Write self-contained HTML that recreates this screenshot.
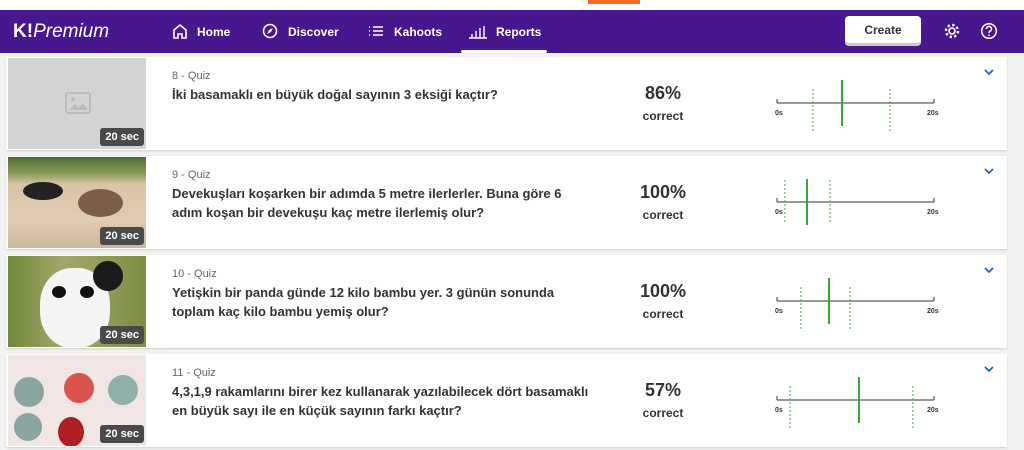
<!DOCTYPE html><html><head><style>
*{margin:0;padding:0;box-sizing:border-box}
body{width:1024px;height:450px;background:#f2f2f2;font-family:"Liberation Sans",sans-serif;position:relative;overflow:hidden;color:#333}
.top{position:absolute;left:0;top:0;width:1024px;height:10px;background:#fff}
.or{position:absolute;left:588px;top:0;width:52px;height:4px;background:#f36b21}
.nav{position:absolute;left:0;top:10px;width:1024px;height:43px;background:#46178f;color:#fff}
.logo{position:absolute;left:13px;top:11px;font-size:19px}
.logo b{font-weight:bold}.logo i{font-weight:normal}
.ni{position:absolute;top:15px;font-size:12px;font-weight:bold}
.ic{position:absolute;top:12px}
.create{position:absolute;left:845px;top:6px;width:76px;height:30px;background:#fff;border-radius:4px;color:#333;font-weight:bold;font-size:12px;text-align:center;line-height:29px;box-shadow:0 -3px 0 #ccc inset}
.ul{position:absolute;left:461px;top:40px;width:86px;height:3px;background:#fff;border-radius:2px}
.card{position:absolute;left:6px;width:1001px;height:93px;background:#fff;box-shadow:0 1px 2px rgba(0,0,0,.15)}
.img{position:absolute;left:2px;top:1px;width:138px;height:91px;overflow:hidden}
.sec{position:absolute;right:2px;bottom:3px;background:#4a4a4a;color:#fff;font-size:11px;font-weight:bold;padding:3px 5px;border-radius:3px}
.q{position:absolute;left:166px;top:13px;font-size:11px;color:#666}
.t{position:absolute;left:166px;top:28px;width:420px;font-size:13px;font-weight:bold;line-height:19px;color:#333}
.p{position:absolute;left:610px;top:26px;width:94px;text-align:center;font-size:18px;font-weight:bold;color:#333}
.c{position:absolute;left:610px;top:52px;width:94px;text-align:center;font-size:12px;font-weight:bold;color:#333}
.tl{position:absolute;left:0;top:0}
.chev{position:absolute;left:978px;top:12px}
</style></head><body>
<div class="top"><div class="or"></div></div>
<div class="nav">
<div class="logo"><b>K!</b><i>Premium</i></div>
<svg class="ic" style="left:172px" width="16" height="18" viewBox="0 0 16 18"><path d="M2 8L8 3l6 5v8h-4v-4H6v4H2z" fill="none" stroke="#fff" stroke-width="1.6"/></svg>
<div class="ni" style="left:197px">Home</div>
<svg class="ic" style="left:262px" width="17" height="18" viewBox="0 0 17 18"><circle cx="8" cy="9" r="6.5" fill="none" stroke="#fff" stroke-width="1.6"/><path d="M11 6L9 10 5 12 7 8z" fill="#fff"/></svg>
<div class="ni" style="left:288px">Discover</div>
<svg class="ic" style="left:368px" width="16" height="18" viewBox="0 0 16 18"><path d="M1 5h1M1 9h1M1 13h1M5 5h10M5 9h10M5 13h10" stroke="#fff" stroke-width="1.4"/></svg>
<div class="ni" style="left:394px">Kahoots</div>
<svg class="ic" style="left:468px" width="20" height="18" viewBox="0 0 20 18"><path d="M1 16h18M4 16v-4M8 16v-7M12 16v-10M16 16v-12" stroke="#fff" stroke-width="1.4"/></svg>
<div class="ni" style="left:496px">Reports</div>
<div class="ul"></div>
<div class="create">Create</div>
<svg class="ic" style="left:943px;top:12px" width="18" height="18" viewBox="0 0 18 18"><circle cx="9" cy="9" r="3" fill="none" stroke="#fff" stroke-width="1.6"/><circle cx="9" cy="9" r="6" fill="none" stroke="#fff" stroke-width="2.4" stroke-dasharray="2.4 2.3"/></svg>
<svg class="ic" style="left:980px;top:12px" width="18" height="18" viewBox="0 0 18 18"><circle cx="9" cy="9" r="7.3" fill="none" stroke="#fff" stroke-width="1.5"/><path d="M6.5 7a2.5 2.5 0 1 1 3.5 2.2c-.8.4-1 .9-1 1.8" fill="none" stroke="#fff" stroke-width="1.5"/><circle cx="9" cy="13.3" r=".9" fill="#fff"/></svg>
</div>

<div class="card" style="top:57px">
<div class="img" style="background:#d3d3d3"><svg style="position:absolute;left:57px;top:34px" width="26" height="22" viewBox="0 0 26 22"><rect x="1" y="1" width="24" height="20" rx="2" fill="none" stroke="#bbb" stroke-width="2"/><circle cx="8" cy="7" r="2" fill="#bbb"/><path d="M4 18l6-6 4 4 4-5 5 7z" fill="#bbb"/></svg><div class="sec">20 sec</div></div>
<div class="q">8 - Quiz</div><div class="t">İki basamaklı en büyük doğal sayının 3 eksiği kaçtır?</div>
<div class="p">86%</div><div class="c">correct</div>
<svg class="tl" width="1001" height="93"><path d="M771 46h157M771 42v4M928 42v4" stroke="#333"/><path d="M807 32v43M884 32v43" stroke="#4a4" stroke-dasharray="2 2"/><path d="M836 23v46" stroke="#3a3" stroke-width="2"/><text x="769" y="58" font-size="7" font-weight="bold" fill="#333" font-family="Liberation Sans">0s</text><text x="921" y="58" font-size="7" font-weight="bold" fill="#333" font-family="Liberation Sans">20s</text></svg>
<svg class="chev" width="10" height="7"><path d="M1 1l4 4 4-4" fill="none" stroke="#1368ce" stroke-width="1.8"/></svg>
</div>

<div class="card" style="top:156px">
<div class="img" style="background:linear-gradient(#4d6b33 0,#8a9a5a 18%,#d9c4a5 30%,#e0cdb0 70%,#cbb79a 100%)"><div style="position:absolute;left:15px;top:25px;width:40px;height:18px;background:#222;border-radius:50%"></div><div style="position:absolute;left:70px;top:32px;width:45px;height:28px;background:#7a5e45;border-radius:50%"></div><div class="sec">20 sec</div></div>
<div class="q">9 - Quiz</div><div class="t">Devekuşları koşarken bir adımda 5 metre ilerlerler. Buna göre 6 adım koşan bir devekuşu kaç metre ilerlemiş olur?</div>
<div class="p">100%</div><div class="c">correct</div>
<svg class="tl" width="1001" height="93"><path d="M771 46h157M771 42v4M928 42v4" stroke="#333"/><path d="M779 24v43M824 24v43" stroke="#4a4" stroke-dasharray="2 2"/><path d="M801 23v46" stroke="#3a3" stroke-width="2"/><text x="769" y="58" font-size="7" font-weight="bold" fill="#333" font-family="Liberation Sans">0s</text><text x="921" y="58" font-size="7" font-weight="bold" fill="#333" font-family="Liberation Sans">20s</text></svg>
<svg class="chev" width="10" height="7"><path d="M1 1l4 4 4-4" fill="none" stroke="#1368ce" stroke-width="1.8"/></svg>
</div>

<div class="card" style="top:255px">
<div class="img" style="background:linear-gradient(90deg,#6f8a3a,#a4a66a 40%,#7c8f45)"><div style="position:absolute;left:32px;top:12px;width:70px;height:80px;background:#f4f4f2;border-radius:45%"></div><div style="position:absolute;left:44px;top:30px;width:14px;height:12px;background:#111;border-radius:50%"></div><div style="position:absolute;left:72px;top:30px;width:14px;height:12px;background:#111;border-radius:50%"></div><div style="position:absolute;left:85px;top:5px;width:30px;height:30px;background:#1a1a1a;border-radius:50%"></div><div class="sec">20 sec</div></div>
<div class="q">10 - Quiz</div><div class="t">Yetişkin bir panda günde 12 kilo bambu yer. 3 günün sonunda toplam kaç kilo bambu yemiş olur?</div>
<div class="p">100%</div><div class="c">correct</div>
<svg class="tl" width="1001" height="93"><path d="M771 46h157M771 42v4M928 42v4" stroke="#333"/><path d="M795 32v43M844 32v43" stroke="#4a4" stroke-dasharray="2 2"/><path d="M823 23v46" stroke="#3a3" stroke-width="2"/><text x="769" y="58" font-size="7" font-weight="bold" fill="#333" font-family="Liberation Sans">0s</text><text x="921" y="58" font-size="7" font-weight="bold" fill="#333" font-family="Liberation Sans">20s</text></svg>
<svg class="chev" width="10" height="7"><path d="M1 1l4 4 4-4" fill="none" stroke="#1368ce" stroke-width="1.8"/></svg>
</div>

<div class="card" style="top:354px">
<div class="img" style="background:#f1e6e3"><div style="position:absolute;left:6px;top:22px;width:30px;height:30px;border-radius:50%;background:#8aa5a0"></div><div style="position:absolute;left:56px;top:18px;width:30px;height:30px;border-radius:50%;background:#d9534f"></div><div style="position:absolute;left:100px;top:20px;width:30px;height:30px;border-radius:50%;background:#8fb0a8"></div><div style="position:absolute;left:6px;top:58px;width:28px;height:28px;border-radius:50%;background:#8aa5a0"></div><div style="position:absolute;left:50px;top:62px;width:26px;height:30px;border-radius:50%;background:#b01e22"></div><div class="sec">20 sec</div></div>
<div class="q">11 - Quiz</div><div class="t">4,3,1,9 rakamlarını birer kez kullanarak yazılabilecek dört basamaklı en büyük sayı ile en küçük sayının farkı kaçtır?</div>
<div class="p">57%</div><div class="c">correct</div>
<svg class="tl" width="1001" height="93"><path d="M771 46h157M771 42v4M928 42v4" stroke="#333"/><path d="M784 32v43M907 32v43" stroke="#4a4" stroke-dasharray="2 2"/><path d="M853 23v46" stroke="#3a3" stroke-width="2"/><text x="769" y="58" font-size="7" font-weight="bold" fill="#333" font-family="Liberation Sans">0s</text><text x="921" y="58" font-size="7" font-weight="bold" fill="#333" font-family="Liberation Sans">20s</text></svg>
<svg class="chev" width="10" height="7"><path d="M1 1l4 4 4-4" fill="none" stroke="#1368ce" stroke-width="1.8"/></svg>
</div>
</body></html>
